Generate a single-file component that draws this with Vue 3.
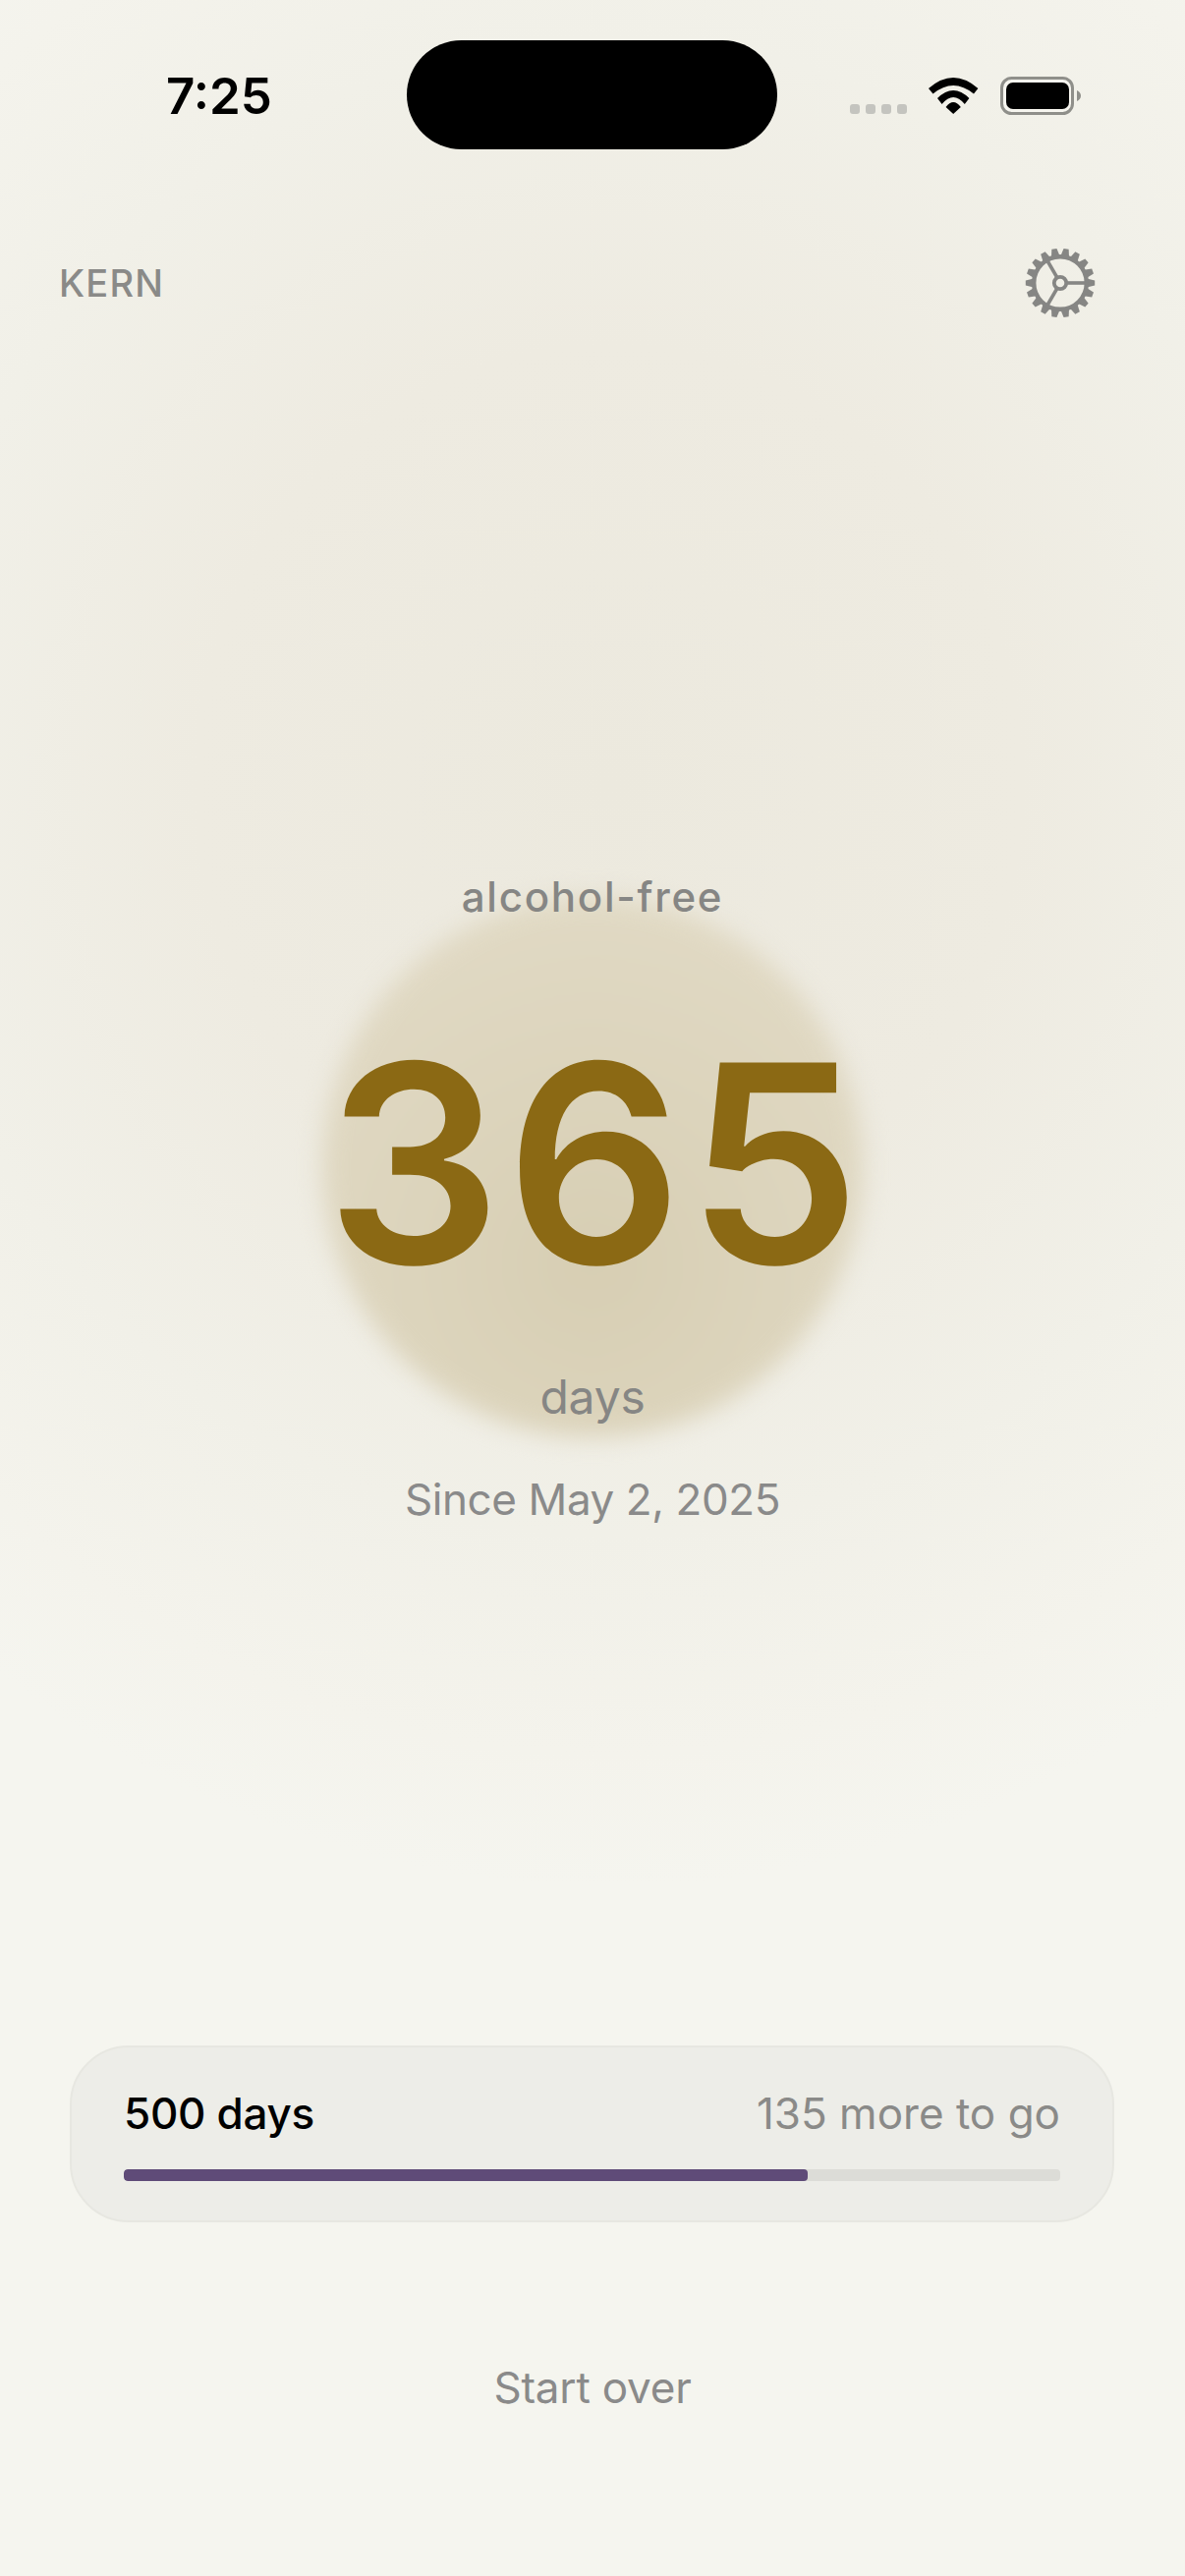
<script setup>
const teeth = Array.from({ length: 18 }, (_, i) => i * 20)
const spokes = [0, 120, 240]
const progress = (365 / 500) * 100
</script>

<template>
  <div class="page">
    <div class="status">
      <span class="time">7:25</span>
      <div class="island"></div>
      <div class="status-right">
        <div class="dots">
          <span v-for="n in 4" :key="n" class="dot"></span>
        </div>
        <svg class="wifi" width="51" height="37" viewBox="0 0 51 37">
          <path d="M0 11Q25.2 -11 50.4 11L46 16.5Q25.2 -0.5 4.5 16.5Z" />
          <path d="M9 21Q25.2 5 41.4 21L36.8 27Q25.2 13 13.6 27Z" />
          <path d="M17.6 30Q25.2 20 32.8 30L25.2 37Z" />
        </svg>
        <svg class="battery" width="83" height="39" viewBox="0 0 83 39">
          <rect x="1.5" y="1.5" width="72" height="36" rx="10" fill="#f6f5ef" stroke="#8f8f8a" stroke-width="3" />
          <rect x="6" y="6" width="64" height="27" rx="7" fill="#000" />
          <path d="M78 14C80.5 15 82 17 82 19.5C82 22 80.5 24 78 25Z" fill="#8f8f8a" />
        </svg>
      </div>
    </div>

    <header class="top">
      <span class="brand">KERN</span>
      <svg class="gear" width="72" height="72" viewBox="-36 -36 72 72">
        <g fill="#868684">
          <path
            v-for="a in teeth"
            :key="a"
            d="M-4.4 -27L-2.6 -35.2L2.6 -35.2L4.4 -27Z"
            :transform="`rotate(${a + 10})`"
          />
        </g>
        <circle r="26.8" fill="none" stroke="#868684" stroke-width="4.4" />
        <line
          v-for="a in spokes"
          :key="a"
          x1="7"
          y1="0"
          x2="26"
          y2="0"
          stroke="#868684"
          stroke-width="3.6"
          :transform="`rotate(${a})`"
        />
        <circle r="6.2" fill="none" stroke="#868684" stroke-width="3.8" />
      </svg>
    </header>

    <main class="hero">
      <div class="orb"></div>
      <span class="label">alcohol-free</span>
      <span class="count">365</span>
      <span class="unit">days</span>
      <span class="since">Since May 2, 2025</span>
    </main>

    <section class="card">
      <div class="card-row">
        <span class="goal">500 days</span>
        <span class="left">135 more to go</span>
      </div>
      <div class="track">
        <div class="fill" :style="{ width: progress + '%' }"></div>
      </div>
    </section>

    <button class="reset">Start over</button>
  </div>
</template>

<style>
html,
body {
  margin: 0;
  background: #f5f5ef;
}
</style>

<style scoped>
.page {
  width: 1206px;
  height: 2622px;
  overflow: hidden;
  display: flex;
  flex-direction: column;
  font-family: Inter, "Liberation Sans", sans-serif;
  color: #8a8a88;
  background:
    radial-gradient(ellipse 1050px 1120px at 620px 800px, #ece9de 0%, #eeebe1 40%, #f1f0e8 68%, #f4f3ec 88%, #f5f5ef 100%) no-repeat,
    #f5f5ef;
}

.status {
  display: grid;
  grid-template-columns: 414px 377px 1fr;
  padding-top: 41px;
}

.time {
  padding-left: 169px;
  margin-top: 27px;
  font-size: 51px;
  line-height: 60px;
  font-weight: 600;
  color: #000;
}

.island {
  height: 111px;
  border-radius: 56px;
  background: #000;
}

.status-right {
  display: flex;
  align-items: flex-end;
  gap: 22px;
  height: 39px;
  margin-top: 37px;
  padding-left: 74px;
}

.dots {
  display: flex;
  gap: 6px;
  margin-bottom: 1px;
}

.dot {
  width: 10px;
  height: 10px;
  border-radius: 3px;
  background: #c4c4bf;
}

.wifi {
  margin-bottom: 1px;
  fill: #000;
}

.top {
  display: flex;
  align-items: center;
  justify-content: space-between;
  height: 72px;
  margin-top: 100px;
  padding: 0 91px 0 60px;
}

.brand {
  font-size: 38px;
  font-weight: 500;
  letter-spacing: 1.2px;
  line-height: 60px;
}

.hero {
  position: relative;
  display: flex;
  flex-direction: column;
  align-items: center;
  margin-top: 559px;
}

.orb {
  position: absolute;
  top: 30px;
  left: 328px;
  width: 550px;
  height: 550px;
  border-radius: 50%;
  background: radial-gradient(circle at 50% 68%, #d7ceb3 0%, #dcd4bc 40%, #e3dcc8 100%);
  filter: blur(12px);
}

.label,
.count,
.unit,
.since {
  position: relative;
}

.label {
  font-size: 42px;
  font-weight: 500;
  line-height: 60px;
  letter-spacing: 1.76px;
  color: #868684;
}

.count {
  margin-top: 97px;
  padding-left: 6px;
  font-size: 281px;
  font-weight: 600;
  line-height: 288px;
  letter-spacing: 4.5px;
  color: #8b6914;
}

.unit {
  margin-top: 64px;
  font-size: 48px;
  line-height: 60px;
  letter-spacing: -0.2px;
  color: #868684;
}

.since {
  margin-top: 44px;
  font-size: 44px;
  line-height: 60px;
  letter-spacing: -0.4px;
  color: #8a8a8a;
}

.card {
  box-sizing: border-box;
  width: 1063px;
  height: 180px;
  margin: 526px 0 0 71px;
  padding: 37px 53px 0;
  border: 2px solid #e7e7e1;
  border-radius: 60px;
  background: #edede8;
}

.card-row {
  display: flex;
  justify-content: space-between;
  font-size: 44px;
  line-height: 60px;
}

.goal {
  font-weight: 500;
  letter-spacing: -0.3px;
  color: #000;
}

.track {
  height: 12px;
  margin-top: 27px;
  border-radius: 4px;
  background: #dcdcd7;
  overflow: hidden;
}

.fill {
  height: 100%;
  border-radius: 4px;
  background: #5f4b78;
}

.reset {
  align-self: center;
  margin-top: 138px;
  padding: 0;
  border: 0;
  background: none;
  font-family: inherit;
  font-size: 44px;
  letter-spacing: -0.2px;
  line-height: 60px;
  color: #8a8a8a;
}
</style>
